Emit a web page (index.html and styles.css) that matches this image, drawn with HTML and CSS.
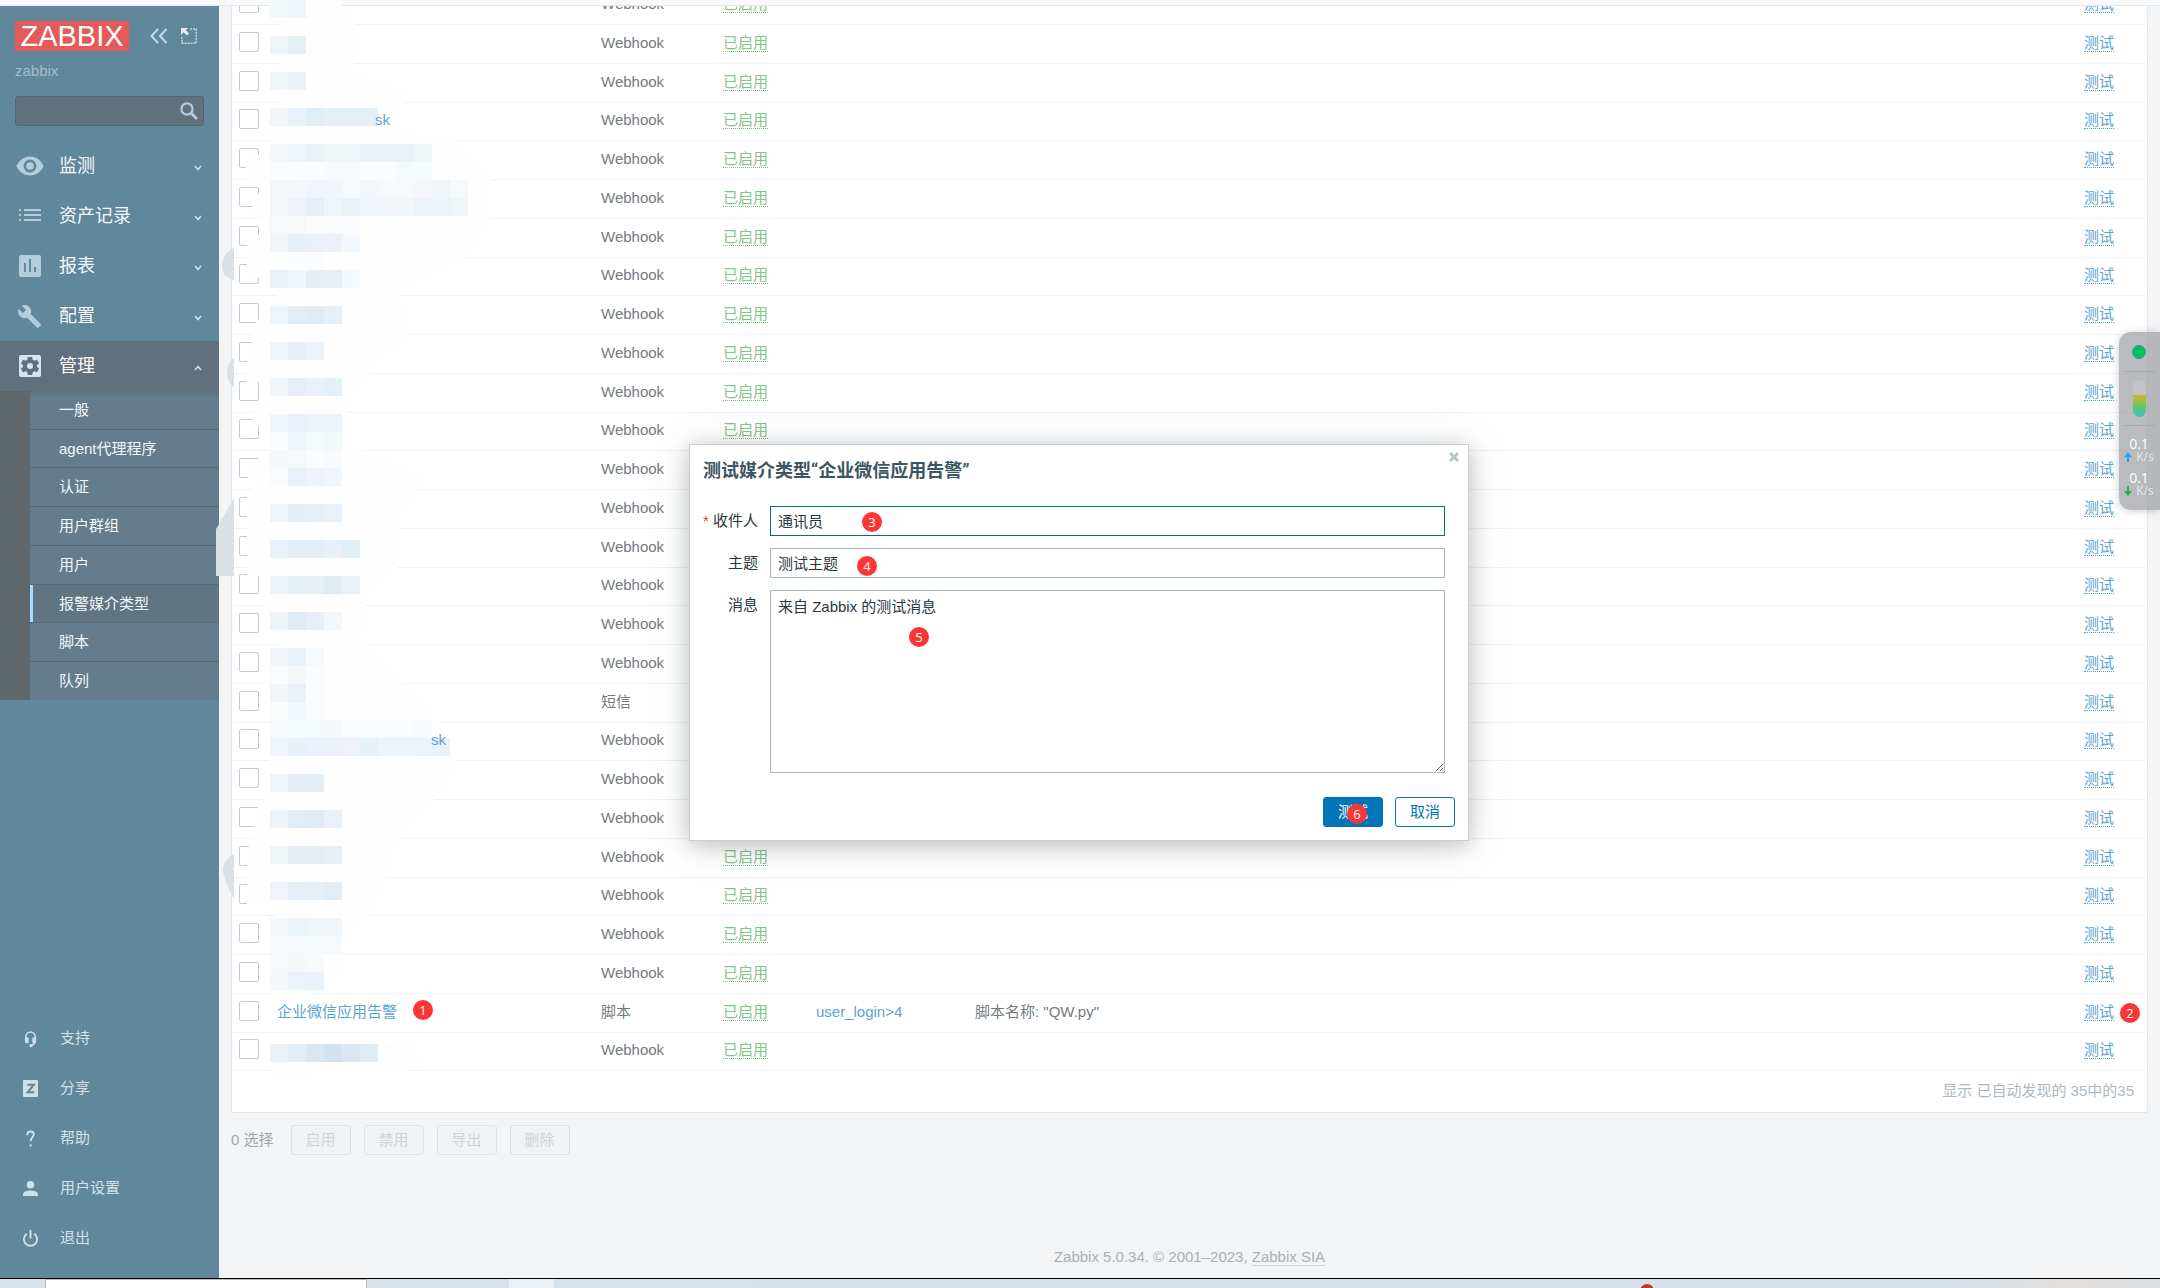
FILE: index.html
```html
<!DOCTYPE html>
<html lang="zh-CN">
<head>
<meta charset="utf-8">
<title>报警媒介类型</title>
<link rel="stylesheet" href="styles.css">
</head>
<body>
<div class="topstrip"></div>
<div class="app">
  <aside class="sidebar">
    <div class="brand">
      <a href="#" class="logo">ZABBIX</a>
      <button class="iconbtn" aria-label="收起侧边栏"><svg width="18" height="16" viewBox="0 0 18 16"><path d="M8 1 1.500 8 8 15M16.500 1 10 8l6.500 7" fill="none" stroke="#c5d9e4" stroke-width="2"/></svg></button>
      <button class="iconbtn" aria-label="隐藏侧边栏"><svg width="16" height="16" viewBox="0 0 16 16"><path d="M9 1h6.200v14.200H1V9" fill="none" stroke="#c5d9e4" stroke-width="1.500" stroke-dasharray="2 1"/><path d="M0 0h7L4.800 2.200 8 5.500 6 7.500 2.500 4.300 0 7z" fill="#e3edf3"/></svg></button>
    </div>
    <div class="server">zabbix</div>
    <form class="search">
      <input type="text" aria-label="搜索">
      <button type="button" class="iconbtn" aria-label="搜索"><svg width="18" height="18" viewBox="0 0 18 18"><circle cx="7" cy="7" r="5.600" fill="none" stroke="#b3cddc" stroke-width="2.200"/><path d="m11 11 6 6" stroke="#b3cddc" stroke-width="2.600"/></svg></button>
    </form>
    <nav class="menu">
      <a href="#" class="item"><svg class="mi" viewBox="0 0 28 24"><path d="M14 2.500C8 2.500 2.900 6.300.4 12 2.900 17.700 8 21.500 14 21.500S25.100 17.700 27.600 12C25.100 6.300 20 2.500 14 2.500z" fill="#b3cddc"/><circle cx="14" cy="12" r="6.400" fill="#61879d"/><circle cx="14" cy="12" r="3.800" fill="#b3cddc"/></svg><span>监测</span><svg class="chev" viewBox="0 0 8 6"><path d="m1 1 3 3.500L7 1"/></svg></a>
      <a href="#" class="item"><svg class="mi" viewBox="0 0 28 24"><path d="M3 5h2v2H3zm0 5h2v2H3zm0 5h2v2H3zM8 5h17v2H8zm0 5h17v2H8zm0 5h17v2H8z" fill="#b3cddc"/></svg><span>资产记录</span><svg class="chev" viewBox="0 0 8 6"><path d="m1 1 3 3.500L7 1"/></svg></a>
      <a href="#" class="item"><svg class="mi" viewBox="0 0 28 24"><rect x="3" y="1" width="22" height="22" rx="2" fill="#b3cddc"/><path d="M8 9h2v9H8zm5-4h2v13h-2zm5 8h2v5h-2z" fill="#61879d"/></svg><span>报表</span><svg class="chev" viewBox="0 0 8 6"><path d="m1 1 3 3.500L7 1"/></svg></a>
      <a href="#" class="item"><svg class="mi" viewBox="0 0 28 24"><path d="M24.700 20 14.800 10.200c.9-2.500.3-5.200-1.600-7.100C11.200 1 8.200.6 5.800 1.700L10 5.900 7 9 2.600 4.800C1.400 7.200 2 10.200 4 12.200c1.900 1.900 4.700 2.500 7.100 1.600l9.900 9.800c.4.400 1.100.4 1.500 0l2.200-2.200c.5-.4.500-1.100 0-1.400z" fill="#b3cddc"/></svg><span>配置</span><svg class="chev" viewBox="0 0 8 6"><path d="m1 1 3 3.500L7 1"/></svg></a>
      <a href="#" class="item open"><svg class="mi" viewBox="0 0 28 24"><rect x="3" y="1" width="22" height="22" rx="2" fill="#d3e5f0"/><path d="M11.800 4h4.400l.5 2.700 1.700 1 2.600-1 2.100 3.700-2.100 1.700v1.800l2.100 1.700-2.100 3.700-2.600-1-1.700 1-.5 2.700h-4.400l-.5-2.700-1.700-1-2.600 1-2.100-3.700L7 13.900v-1.800l-2.100-1.700L7 6.700l2.600 1 1.700-1z" transform="translate(0 -1)" fill="#60717d"/><circle cx="14" cy="12" r="3" fill="#d3e5f0"/></svg><span>管理</span><svg class="chev" viewBox="0 0 8 6"><path d="M1 5 4 1.500 7 5"/></svg></a>
      <ul class="submenu">
        <li><a href="#">一般</a></li>
        <li><a href="#">agent代理程序</a></li>
        <li><a href="#">认证</a></li>
        <li><a href="#">用户群组</a></li>
        <li><a href="#">用户</a></li>
        <li class="selected"><a href="#">报警媒介类型</a></li>
        <li><a href="#">脚本</a></li>
        <li><a href="#">队列</a></li>
      </ul>
    </nav>
    <nav class="usermenu">
      <a href="#"><svg viewBox="0 0 16 18"><path d="M3 11V7a5 5 0 0 1 10 0v5c0 3-2 4-4.500 4.500" fill="none" stroke="#d0e0ea" stroke-width="1.600"/><path d="M2 8h4v6H4a2 2 0 0 1-2-2zm8 0h4v4a2 2 0 0 1-2 2h-2zM7 15h3v3H7z" fill="#d0e0ea"/></svg>支持</a>
      <a href="#"><svg viewBox="0 0 16 18"><rect x="0" y="0" width="16" height="18" rx="1" fill="#d0e0ea"/><path d="M4.500 5h7L5 13h7" fill="none" stroke="#61879d" stroke-width="2.200"/></svg>分享</a>
      <a href="#"><svg viewBox="0 0 16 18"><path d="M4.500 5.500C4.500 2.500 6 1.500 8 1.500s3.500 1.200 3.500 3.300c0 2.700-3.300 3-3.300 7.200M8.200 15v2.500" fill="none" stroke="#d0e0ea" stroke-width="2"/></svg>帮助</a>
      <a href="#"><svg viewBox="0 0 16 18"><circle cx="8" cy="5" r="4" fill="#d0e0ea"/><path d="M0 17v-2c0-3 5-4 8-4s8 1 8 4v2z" fill="#d0e0ea"/></svg>用户设置</a>
      <a href="#"><svg viewBox="0 0 16 18"><path d="M4 4a7 7 0 1 0 8 0M8 0v9" fill="none" stroke="#d0e0ea" stroke-width="2"/></svg>退出</a>
    </nav>
  </aside>
  <main class="main">
    <div class="panel">
      <table class="list">
        <colgroup><col class="c-check"><col class="c-name"><col class="c-type"><col class="c-status"><col class="c-used"><col><col class="c-action"></colgroup>
        <tbody id="rows"></tbody>
      </table>
      <div class="stats">显示 已自动发现的 35中的35</div>
    </div>
    <div class="actions">
      <span>0 选择</span>
      <button disabled>启用</button>
      <button disabled>禁用</button>
      <button disabled>导出</button>
      <button disabled>删除</button>
    </div>
    <footer class="footer">Zabbix 5.0.34. © 2001–2023, <a href="#">Zabbix SIA</a></footer>
  </main>
</div>
<div class="taskbar"><i class="tb-search"></i><i class="tb-item"></i><i class="tb-alert"></i></div>

<svg class="redaction" width="300" height="1100" viewBox="216 0 300 1100" aria-hidden="true">
  <g fill="#dae1e6">
    <path d="M234 248c-8 3-12 11-12 18s4 12 12 14zM234 358c-5 3-7 9-7 15s3 12 7 15zM234 498l-16 28-2 3v47h18zM234 854c-8 4-12 12-11 17 1 7 6 19 11 28z"/>
  </g>
  <path fill="#fefefe" d="M262 6h82l12 17-2 39v10l51 20v12l-20 8-14 16 85 11 35 38-2 39-20 39-71 35 13 42-38 36-27 39 7 38 72 32-27 46 4 40-38 38-2 36 35 39 36 39 26 40-17 37-42 39-12 38-15 39-31 39 4 22-30 24-27 8-14-3-7-15 4-20 13-12-9-13 3-20-8-15-24 3V852l6-17h7l-7-10 6-20 18-18-8-27v-25l6-20-4-20-10-15 3-15 19-20-8-20-14-21 2-14 14-14h-30v-84l13-6-12-7 1-15 35-17-9-15-23-8 1-20 18-12 19-9-22-1h-21v-30h4l2-25 25-33 15-13-30-2-16-5v-32l21-13-17-20 12-24-17-6v-20l25-8 6-7-10-8-8-12v-10l26-15-6-15 2-18-6-12 5-20-2-20z"/>
  <path fill="#fefefe" d="M268 1050l8-8h140l4 28-150 6z"/>
  <g id="mosaic"></g>
</svg>

<section class="dialog" role="dialog" aria-labelledby="dlg-title">
  <button class="close" aria-label="关闭"><svg width="10" height="10" viewBox="0 0 10 10"><path d="m1 1 8 8M9 1 1 9" stroke="#b9c4ca" stroke-width="3"/></svg></button>
  <h4 id="dlg-title">测试媒介类型“企业微信应用告警”</h4>
  <form class="fields">
    <label for="sendto" class="required">收件人</label>
    <div class="field"><input id="sendto" class="focus" type="text" value="通讯员"><b class="badge b3">3</b></div>
    <label for="subject">主题</label>
    <div class="field"><input id="subject" type="text" value="测试主题"><b class="badge b4">4</b></div>
    <label for="message">消息</label>
    <div class="field"><textarea id="message">来自 Zabbix 的测试消息</textarea><b class="badge b5">5</b></div>
  </form>
  <div class="buttons">
    <button class="primary">测试<b class="badge b6">6</b></button>
    <button>取消</button>
  </div>
</section>

<aside class="netmeter">
  <i class="dot"></i>
  <div class="gauge"><i></i></div>
  <div class="rate"><strong>0.1</strong><span><svg width="8" height="10" viewBox="0 0 8 10"><path d="M4 0 0 5h3v5h2V5h3z" fill="#18a8ff"/></svg>K/s</span></div>
  <div class="rate"><strong>0.1</strong><span><svg width="8" height="10" viewBox="0 0 8 10"><path d="M4 10 0 5h3V0h2v5h3z" fill="#0abf5b"/></svg>K/s</span></div>
</aside>
<script src="app.js"></script>
</body>
</html>
```
FILE: app.js
```js
// Media type rows; every row is an enabled webhook unless stated otherwise.
const special = {
  4: { name: '<a href="#" class="tail">sk</a>' },
  19: { type: '短信' },
  20: { name: '<a href="#" class="tail long">sk</a>' },
  27: {
    name: '<a href="#">企业微信应用告警</a><b class="badge b1">1</b>',
    type: '脚本', used: '<a href="#">user_login&gt;4</a>',
    details: '脚本名称: "QW.py"', badge: '<b class="badge b2">2</b>'
  }
};
let html = '';
for (let n = 1; n <= 28; n++) {
  const r = special[n] || {};
  html += `<tr><td><input type="checkbox" aria-label="选择第 ${n} 行"></td><td>${r.name || ''}</td>` +
    `<td>${r.type || 'Webhook'}</td><td><a href="#" class="dotted green">已启用</a></td>` +
    `<td>${r.used || ''}</td><td>${r.details || ''}</td>` +
    `<td><a href="#" class="dotted">测试</a>${r.badge || ''}</td></tr>`;
}
document.getElementById('rows').innerHTML = html;

// Pixelated names: top edge, then the colour of each 18px cell.
const cells = `0 f3f8fb eff6f9 fdfdfd fdfdfd
36 eef5f9 e4f0f6
72 f1f7f9 eaf1f9
108 f0f5f8 e9f0f9 dfedf5 e5eff6 e5eff6 e4f0f6
144 f4f8fa eff4f8 e9f0f7 eef5f7 eef4f7 e9f1f9 e9f1f9 e9f1f8 eef6f8
162 fafbfc fafbfd fafbfd f6fafc f5f9fc f9fbfe f9fbfd f4f9fc f5fafc
180 f3f7fa f3f7fc eff5fa f0f6fa f4f9fc f3f6fa f7f8fc f7f8fc f3f7fb eef4f8 f4f9fc
198 f3f7fb eff2fa e7eef8 eef5fa e9f3f7 eff5fa f2f6fa f2f6fa ebf4f7 ebf4f7 eff5f9
216 f5f9fc f5f9fc f9fbfd f9fafd f9fafd
234 f0f6f9 e7eff8 e9f0f9 ebf0f9 f3f8fc
252 fdfffe fafcfe fafcfe
270 e8f1fa eff5fa e2edf4 e5edf5 f4f9fd
306 eef5fa e0edf5 deebf4 e5eff7
342 eff5fa e5edf6 eaf2fa
378 f0f6fa e5edf6 e8f0f9 e3f0f7
414 f0f6fa e8f1fb eaf2fb eef3f7
432 fafcfd edf6f8 f4f9fb f2f7fa
450 f4f8fc f5f9fc f9fbfc f7fafb
468 f9fbfd e8f0fa edf3f8 eff5fa
504 eef5fa e2edf4 e5eef6 e8f1fa
540 eaf1fb e2eef5 e2eef5 e9eff8 e2eef6
576 ecf4f8 e2eff6 e4eff6 deebf5 e8f0fa
612 ecf4f8 dfecf5 e6eff8 f2f7fb
648 f2f5fa e8f2fa f4f9fc
666 fafbfc f4f8fb fafbfd
684 f2f6fa e9f0fa fafbfd
702 fafdfc f1f7fa fafbfd
720 f6fafc f5fafc f4f9fb f4f8fb f8fafc f8fafc f8fafc f8fafc f5f9fc
738 f0f5fb e7eff8 ebf0fa ebf0fa ecf2f8 e6f0f8 ecf3f9 ecf3f9 ebf2f8 e9f1f9
774 eef5f9 e2edf4 e2edf4
810 ecf4f9 e1ecf5 e0ebf4 e8f0fa
846 eff6f8 e4edf5 e2edf4 e6eef6
882 eef4f9 e5edf6 e6eef6 e1edf6
918 f4f8fa eaf3f7 eef5f8 eff5f9
936 f7fafb f5f9fb f5f9fb f5f9fb
954 f5f9fc f5f8fb f6fafd
972 f4f8fb ecf2fc e9f1fb
1044 eaf1f9 e1edf6 d9e7f1 d2e2f1 dde7f3 dfecf5 fbfdfe`;
document.getElementById('mosaic').innerHTML = cells.split('\n').map(line => {
  const [y, ...colors] = line.split(' ');
  return colors.map((c, i) => `<rect x="${270 + i * 18}" y="${y}" width="18" height="18" fill="#${c}"/>`).join('');
}).join('');
```
FILE: styles.css
```css
* { box-sizing: border-box; }
html, body { height: 100%; margin: 0; }
body {
  display: flex; flex-direction: column; position: relative; overflow: hidden;
  font: 15px/20px "Liberation Sans", "Noto Sans CJK SC", sans-serif;
  color: #737b80; background: #f2f4f6;
}
a { color: #5ba4d2; text-decoration: none; }
button, input, textarea { font: inherit; }
.iconbtn { padding: 0; border: 0; background: none; display: flex; }

.topstrip { flex: none; height: 6px; background: #f9fafc; border-bottom: 1px solid #e4e7ea; }
.app { flex: 1; min-height: 0; display: flex; }

.sidebar { flex: none; width: 219px; display: flex; flex-direction: column; background: #61879d; padding-bottom: 15px; }
.brand { display: flex; align-items: center; padding: 15px 0 0 15px; }
.logo { width: 114px; height: 30px; background: #e45959; color: #fff; font-size: 29px; line-height: 30px; text-align: center; margin-right: 21px; }
.brand .iconbtn { margin-right: 13px; }
.server { padding: 10px 15px 0; color: #a3bdcb; }
.search { display: flex; align-items: center; margin: 15px; height: 30px; background: #60717d; border: 1px solid #59656c; border-radius: 3px; padding-right: 5px; }
.search input { flex: 1; min-width: 0; border: 0; background: none; outline: 0; color: #fff; }
.item { display: flex; align-items: center; height: 50px; padding: 0 17px 0 16px; color: #f3f8fb; font-size: 18px; }
.item span { flex: 1; margin-left: 15px; }
.mi { width: 28px; height: 24px; }
.chev { width: 8px; height: 6px; margin-top: 4px; fill: none; stroke: #d3e2eb; stroke-width: 1.5; }
.open { background: #60717d; color: #fff; }
.submenu { list-style: none; margin: 0; padding: 0; border-left: 30px solid #5e676c; background: linear-gradient(#5f7380, #647c8b 8px); }
.submenu li { height: 39px; border-bottom: 1px solid #5a696f; }
.submenu li:nth-child(4n+2), .submenu li:last-child { height: 38px; }
.submenu li:last-child { border-bottom: 0; }
.submenu a { display: flex; align-items: center; height: 100%; padding-left: 29px; color: #f3f8fb; }
.submenu .selected a { background: #607482; border-left: 3px solid #a5dcff; padding-left: 26px; }
.usermenu { margin-top: auto; }
.usermenu a { display: flex; align-items: center; gap: 22px; height: 50px; padding-left: 23px; color: #d3e1ea; }
.usermenu svg { width: 15px; height: 17px; }

.main { flex: 1; min-width: 0; display: flex; flex-direction: column; padding: 0 12px; overflow: hidden; }
.panel { flex: none; margin-top: -21px; background: #fff; border: 1px solid #e3e7ea; padding: 0 1px; }
.list { width: 100%; table-layout: fixed; border-collapse: separate; border-spacing: 0; }
.c-check { width: 34px; } .c-name { width: 324px; } .c-type { width: 122px; }
.c-status { width: 93px; } .c-used { width: 159px; } .c-action { width: 72px; }
.list tr { height: 39px; }
.list tr:nth-child(4n) { height: 38px; }
.list td { position: relative; padding: 0 0 3px 10px; border-bottom: 1px solid #f0f2f3; white-space: nowrap; }
.list td:first-child { padding: 0 0 5px 6px; }
.list input { appearance: none; display: block; width: 20px; height: 20px; margin: 0; border: 1px solid #c0cbd2; border-radius: 2px; background: #fff; }
.dotted { border-bottom: 1px dotted #4f9fcf; }
.green { color: #86c488; border-color: #7bbf7d; }
.tail { position: relative; z-index: 2; margin-left: 98px; }
.tail.long { margin-left: 154px; }
.stats { padding: 10px 12px 11px; text-align: right; color: #acb8bf; }
.actions { display: flex; align-items: center; gap: 13px; margin-top: 12px; color: #9ba7af; }
.actions span { margin-right: 4px; }
.actions button { width: 60px; height: 30px; padding: 0; border: 1px solid #dde2e5; border-radius: 3px; background: #f1f2f3; color: #cdd5d9; }
.footer { margin-top: auto; padding-bottom: 11px; text-align: center; color: #a4b1b9; }
.footer a { color: inherit; border-bottom: 1px solid #cfd6da; }

.taskbar { flex: none; position: relative; height: 10px; border-top: 1px solid #000; background: linear-gradient(90deg, #d7e2ea, #d5e0e8 90%, #e3dfdc 96%, #dadfe3); display: flex; overflow: hidden; }
.tb-search { width: 322px; margin-left: 45px; background: #fff; border: 1px solid #bbb; border-bottom: 0; }
.tb-item { width: 45px; margin-left: 142px; background: #eaf0f3; }
.tb-alert { width: 14px; height: 14px; margin: 5px 0 0 1086px; border-radius: 7px; background: #d03325; box-shadow: -8px 3px 0 -1px #e8b53a; }

.redaction { position: absolute; left: 216px; top: 0; }

.badge { position: absolute; width: 20px; height: 20px; border-radius: 10px; background: #fd3535; color: #fff; font: 400 13px/20px "Open Sans", sans-serif; text-align: center; }
.b1 { left: 146px; top: 6px; z-index: 2; } .b2 { left: 46px; top: 9px; }
.b3 { left: 92px; top: 6px; } .b4 { left: 87px; top: 8px; }
.b5 { left: 139px; top: 37px; } .b6 { left: 23px; top: 6px; }

.dialog { position: absolute; left: 50%; top: 444px; width: 780px; margin-left: -391px; background: #fff; border: 1px solid #c5cfd5; box-shadow: 0 4px 20px rgba(0,0,0,.2), 0 4px 40px rgba(70,90,105,.15); color: #2b373e; padding: 16px 13px 13px; z-index: 3; }
.close { position: absolute; top: 7px; right: 9px; padding: 0; border: 0; background: none; display: flex; }
.dialog h4 { margin: 0 0 25px; font: 700 18px/20px Roboto, "Noto Sans CJK SC", sans-serif; color: #3c5563; }
.fields { display: grid; grid-template-columns: 55px 1fr; gap: 12px; padding-right: 10px; }
.fields label { text-align: right; line-height: 30px; white-space: nowrap; }
.required::before { content: "* "; color: #e33734; }
.field { position: relative; display: flex; }
.field input, .field textarea { width: 100%; margin: 0; border: 1px solid #a9b7be; outline: 0; padding: 0 7px 2px; color: #2b373e; background: #fff; border-radius: 0; }
.field input { height: 30px; }
.field textarea { height: 183px; padding-top: 6px; resize: vertical; }
.field .focus { border-color: #0a659c; }
.buttons { display: flex; justify-content: flex-end; gap: 12px; margin-top: 24px; }
.buttons button { position: relative; width: 60px; height: 30px; padding: 0; border: 1px solid #0275b8; border-radius: 3px; background: #fff; color: #0275b8; }
.buttons .primary { background: #0275b8; color: #fff; }

.netmeter { position: absolute; right: 0; top: 332px; width: 41px; height: 178px; border-radius: 12px 0 0 12px; background: rgba(148,150,155,.65); box-shadow: 0 1px 8px rgba(0,0,0,.2); padding: 13px 1px 0 0; display: flex; flex-direction: column; align-items: center; color: #fff; z-index: 2; }
.dot { width: 14px; height: 14px; border-radius: 7px; background: #00c261; border: 1px solid #3f8fb8; }
.gauge { width: 33px; height: 55px; margin: 12px 0 11px; padding: 8px 10px; border-top: 1px solid #a5acb0; border-bottom: 1px solid #a5acb0; display: flex; }
.gauge i { width: 13px; border-radius: 7px; background: linear-gradient(#c3c4c7 40%, #d9b51c 40%, #5fc96b 72%, #3fc0c4); }
.rate { height: 34px; display: flex; flex-direction: column; align-items: center; font: 12px/13px "Open Sans", sans-serif; }
.rate strong { font-weight: 400; font-size: 14px; }
.rate span { display: flex; align-items: center; gap: 4px; color: #e8e8ea; }
```
